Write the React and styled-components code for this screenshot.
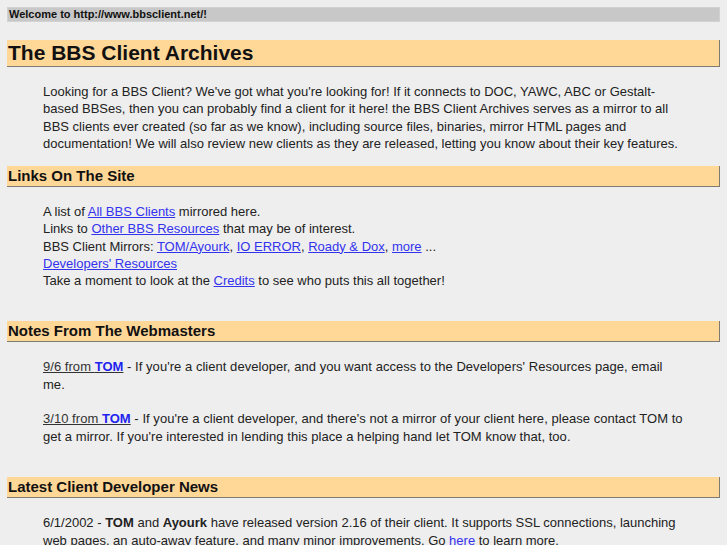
import React from 'react'
import styled, { createGlobalStyle } from 'styled-components'

const Global = createGlobalStyle`
  body {
    margin: 0;
    background: #eeeeee;
    color: #222222;
    font-family: "Liberation Sans", Arial, sans-serif;
  }
`

const Page = styled.div`
  padding: 7px 7px 0 7px;
`

const Welcome = styled.div`
  background: #c8c8c8;
  border: 1px solid #d2d2d2;
  font-size: 11px;
  font-weight: bold;
  line-height: 13px;
  padding: 0 0 0 1px;
  color: #111;
`

const Bar = styled.h2`
  margin: ${p => p.$top}px 0 0 0;
  background: #ffd797;
  border-right: 1px solid #7f7a70;
  border-bottom: 1px solid #7f7a70;
  font-size: ${p => (p.$big ? 21 : 15)}px;
  line-height: ${p => (p.$big ? 26 : 20)}px;
  font-weight: bold;
  color: #111;
  padding: 0 0 0 1px;
`

const Body = styled.div`
  margin: ${p => p.$top}px 0 0 0;
  padding: 0 36px;
  font-size: 13px;
  line-height: ${p => p.$lh || 17.3}px;
  letter-spacing: ${p => p.$ls || 0}px;
`

const Note = styled.p`
  margin: ${p => p.$top}px 0 0 0;
`

const A = styled.a`
  color: #3333ee;
  text-decoration: ${p => (p.$plain ? 'none' : 'underline')};
`

const Stamp = styled.span`
  text-decoration: underline;
  color: #333;
`

const Who = styled.b`
  color: #2222ee;
`

export default function App() {
  return (
    <Page>
      <Global />
      <Welcome>Welcome to http://www.bbsclient.net/!</Welcome>

      <Bar $big $top={18}>The BBS Client Archives</Bar>
      <Body $top={16}>
        Looking for a BBS Client? We've got what you're looking for! If it connects to DOC, YAWC, ABC or Gestalt-based BBSes, then you can probably find a client for it here! the BBS Client Archives serves as a mirror to all BBS clients ever created (so far as we know), including source files, binaries, mirror HTML pages and documentation! We will also review new clients as they are released, letting you know about their key features.
      </Body>

      <Bar $top={14}>Links On The Site</Bar>
      <Body $top={16}>
        A list of <A href="#">All BBS Clients</A> mirrored here.<br />
        Links to <A href="#">Other BBS Resources</A> that may be of interest.<br />
        BBS Client Mirrors: <A href="#">TOM/Ayourk</A>, <A href="#">IO ERROR</A>, <A href="#">Roady &amp; Dox</A>, <A href="#">more</A> ...<br />
        <A href="#">Developers' Resources</A><br />
        Take a moment to look at the <A href="#">Credits</A> to see who puts this all together!
      </Body>

      <Bar $top={31}>Notes From The Webmasters</Bar>
      <Body $top={16} $lh={18} $ls={0.04}>
        <Note $top={0}>
          <Stamp>9/6 from <Who>TOM</Who></Stamp> - If you're a client developer, and you want access to the Developers' Resources page, email me.
        </Note>
        <Note $top={16}>
          <Stamp>3/10 from <Who>TOM</Who></Stamp> - If you're a client developer, and there's not a mirror of your client here, please contact TOM to get a mirror. If you're interested in lending this place a helping hand let TOM know that, too.
        </Note>
      </Body>

      <Bar $top={31}>Latest Client Developer News</Bar>
      <Body $top={16} $lh={18}>
        6/1/2002 - <b>TOM</b> and <b>Ayourk</b> have released version 2.16 of their client. It supports SSL connections, launching web pages, an auto-away feature, and many minor improvements. Go <A href="#" $plain>here</A> to learn more.
      </Body>
    </Page>
  )
}
